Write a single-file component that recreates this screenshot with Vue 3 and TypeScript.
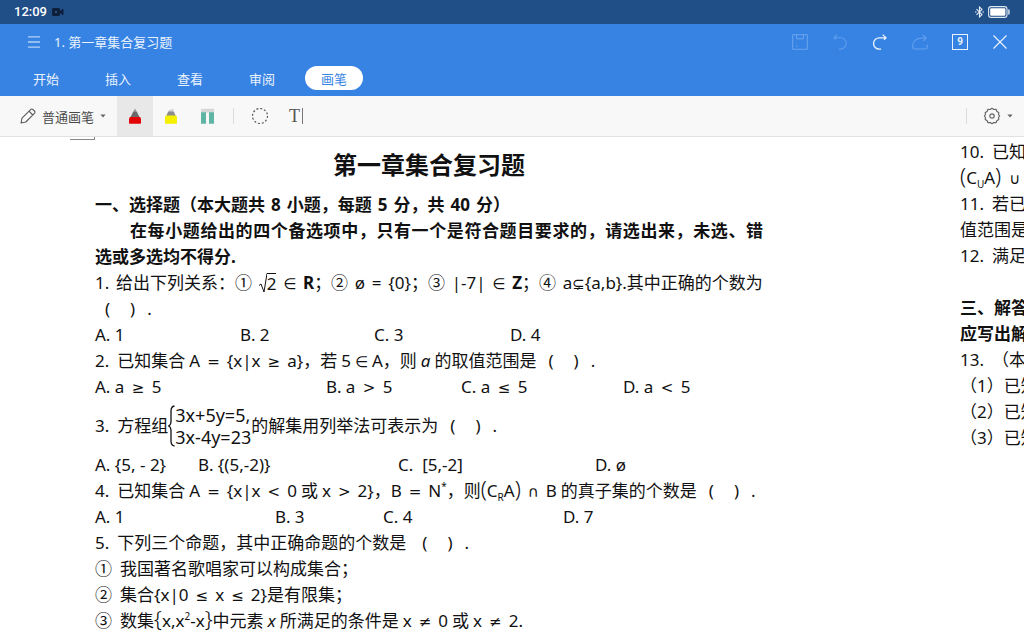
<script setup lang="ts">
import { ref } from 'vue'

const tabs: string[] = ['开始', '插入', '查看', '审阅', '画笔']
const activeTab = ref('画笔')
const activeTool = ref('pen')
</script>

<template>
  <div class="app">
    <div class="status">
      <span class="clock">12:09</span>
      <svg class="cam" width="12" height="8" viewBox="0 0 12 8">
        <rect x="0" y="0" width="8" height="8" rx="1.5" fill="#0d1f3a" />
        <path d="M8 3.5 11 1.2V6.8L8 4.5Z" fill="#0d1f3a" stroke="#0d1f3a" />
        <circle cx="4" cy="4" r="1.1" fill="#3d5f90" />
      </svg>
      <span class="grow"></span>
      <svg width="9" height="12" viewBox="0 0 9 12" fill="none" stroke="#e6eef8" stroke-width="1.1">
        <path d="M1.5 3.2 7 8.6 4.5 11V1L7 3.4 1.5 8.8" />
        <path d="M0 6h1.600M7.400 6H9" />
      </svg>
      <svg class="battery" width="22" height="12" viewBox="0 0 22 12">
        <rect x=".6" y=".6" width="18.4" height="10.8" rx="2.4" fill="none" stroke="#dfe8f3" stroke-width="1.1" />
        <rect x="2.2" y="2.2" width="15.2" height="7.6" rx="1" fill="#fff" />
        <path d="M20.9 3.5v5" stroke="#dfe8f3" stroke-width="1.4" />
      </svg>
    </div>

    <header class="head">
      <div class="titlebar">
        <button class="menu" aria-label="菜单">
          <svg width="12" height="12" viewBox="0 0 12 12" stroke="#b4d2f6" stroke-width="1.3">
            <path d="M0 .8h12M0 6h12M0 11.2h12" />
          </svg>
        </button>
        <span class="name">1. 第一章集合复习题</span>
        <span class="grow"></span>
        <button class="act" aria-label="保存">
          <svg width="16" height="16" viewBox="0 0 16 16" fill="none" stroke="#6ba6ee" stroke-width="1">
            <path d="M.7.7h14.6v14.6H.7zM4.6.7v4.2h6.8V.7M4 12.2h1.4" />
          </svg>
        </button>
        <button class="act" aria-label="撤销">
          <svg width="16" height="16" viewBox="0 0 16 16" fill="none" stroke="#5f9dec" stroke-width="1.1">
            <path d="M5.2.8 2 3.8l1.600 1.800M2.200 3.800H8.600a5.600 5.600 0 0 1 0 11.300H6.800" />
          </svg>
        </button>
        <button class="act" aria-label="恢复">
          <svg width="16" height="16" viewBox="0 0 16 16" fill="none" stroke="#eef5fe" stroke-width="1.300">
            <path d="M10.600.6 14 3.800l-2 2M13.800 3.800H7.200a5.600 5.600 0 0 0 0 11.300h1.900" />
          </svg>
        </button>
        <button class="act" aria-label="分享">
          <svg width="16" height="16" viewBox="0 0 16 16" fill="none" stroke="#65a2ed" stroke-width="1.1">
            <path d="M10.8.8 14.2 4l-2.800 2.800M14 4H9.600C4.600 4 1 7.200.8 11v2.600q0 1.400 1.400 1.400h11.600q1.400 0 1.400-1.400v-2.800" />
          </svg>
        </button>
        <button class="act" aria-label="窗口"><span class="count">9</span></button>
        <button class="act" aria-label="关闭">
          <svg width="14" height="14" viewBox="0 0 14 14" stroke="#e8f1fc" stroke-width="1.2">
            <path d="M.5.5 13.5 13.5M13.5.5.5 13.5" />
          </svg>
        </button>
      </div>
      <nav class="tabs">
        <button
          v-for="t in tabs"
          :key="t"
          :class="['tab', { on: t === activeTab }]"
          @click="activeTab = t"
        >{{ t }}</button>
      </nav>
    </header>

    <div class="tools">
      <button class="brush">
        <svg width="16" height="16" viewBox="0 0 16 16" fill="none" stroke="#5a5a5a" stroke-width="1.1" stroke-linejoin="round">
          <path d="M1 15 2 10.2 10.6 1.6q1.2-1.2 2.4 0l1.4 1.4q1.2 1.2 0 2.4L5.8 14ZM9 3.2 12.8 7" />
        </svg>
        <span>普通画笔</span>
        <svg width="6" height="4" viewBox="0 0 6 4"><path d="M.4.4h5.2L3 3.6Z" fill="#666" /></svg>
      </button>
      <button :class="['tool', { on: activeTool === 'pen' }]" aria-label="钢笔" @click="activeTool = 'pen'">
        <svg width="12" height="16" viewBox="0 0 12 16">
          <path d="M6 .6 8 4.2H4Z" fill="#999" />
          <path d="M4.2 3.8h3.6L11 10H1Z" fill="#6b6b6b" />
          <path d="M1 9h10l1 1.4V15q0 .8-.8.8H.8Q0 15.8 0 15v-4.600Z" fill="#e30505" />
        </svg>
      </button>
      <button :class="['tool', { on: activeTool === 'marker' }]" aria-label="荧光笔" @click="activeTool = 'marker'">
        <svg width="12" height="16" viewBox="0 0 12 16">
          <path d="M3.600 2.400 8.400.4V4.200H3.600Z" fill="#d2d2d2" />
          <path d="M3.200 3.600h5.600L11 8.600H1Z" fill="#8d8d8d" />
          <path d="M1 7.600h10l1 1.400v6q0 .8-.8.8H.8Q0 15.800 0 15V9Z" fill="#f5f000" />
        </svg>
      </button>
      <button :class="['tool', { on: activeTool === 'eraser' }]" aria-label="橡皮" @click="activeTool = 'eraser'">
        <svg width="13" height="16" viewBox="0 0 13 16">
          <path d="M0 .8h13v3.800H0Z" fill="#d6d6d6" />
          <path d="M0 4.200h5v11.600H0zM8 4.200h5v11.600H8z" fill="#5fb5a3" />
        </svg>
      </button>
      <span class="sep"></span>
      <button class="tool" aria-label="套索">
        <svg width="18" height="18" viewBox="0 0 18 18">
          <circle cx="9" cy="9" r="7.500" fill="none" stroke="#555" stroke-width="1.200" stroke-dasharray="2 1.930" />
        </svg>
      </button>
      <button class="tool text-tool" aria-label="文字"><span>T</span><i></i></button>
      <span class="grow"></span>
      <span class="sep"></span>
      <button class="gear" aria-label="设置">
        <svg width="18" height="18" viewBox="0 0 18 18" fill="none" stroke="#666" stroke-width="1.200" stroke-linejoin="round">
          <path d="M7.200 2.500 9 1.300l1.800 1.200 2.200-.2.800 2L15.800 5.700 15.500 7.500 16.600 9l-1.100 1.500.3 1.900-2 1.300-.8 2-2.200-.2L9 16.700l-1.800-1.200-2.200.2-.8-2L2.200 12.400l.3-1.900L1.400 9l1.100-1.500L2.200 5.700 4.200 4.300l.8-2Z" />
          <circle cx="9" cy="9" r="2.200" />
        </svg>
        <svg width="6" height="4" viewBox="0 0 6 4"><path d="M.4.4h5.200L3 3.600Z" fill="#666" /></svg>
      </button>
    </div>

    <main class="doc">
      <span class="mark"></span>
      <article class="page">
        <h1>第一章集合复习题</h1>
        <p class="line bold g6">
          <span>一、选择题（本大题共</span><span>8</span><span>小题，每题</span><span>5</span><span>分，共</span><span>40</span><span>分）</span>
        </p>
        <p class="just bold indent">在每小题给出的四个备选项中，只有一个是符合题目要求的，请选出来，未选、错</p>
        <p class="line bold">选或多选均不得分.</p>

        <p class="line spread">
          <span class="lead">1.</span><span>给出下列关系：①</span><span class="root"><svg width="8" height="20" viewBox="0 0 8 20" fill="none" stroke="#111"><path d="M0 12.500 2 11l3 8L8 .5" /></svg><span>2</span></span><span class="m">∈</span><span><b>R</b>；②</span><span>ø</span><span>=</span><span>{0}；③</span><span>|-7|</span><span class="m">∈</span><span><b>Z</b>；④</span><span>a<span class="rel">⊊</span>{a,b}.其中正确的个数为</span>
        </p>
        <p class="line pad"><span>(</span><span class="blank"></span><span>)</span><span class="dot">.</span></p>
        <div class="line opts q1"><span>A. 1</span><span>B. 2</span><span>C. 3</span><span>D. 4</span></div>

        <p class="line g4">
          <span class="num">2.</span><span>已知集合</span><span>A</span><span class="m">=</span><span>{x|x</span><span class="m">≥</span><span>a}，若</span><span>5</span><span class="rel">∈</span><span>A，则</span><i>a</i><span>的取值范围是</span><span class="ask"><span>(</span><span class="blank"></span><span>)</span><span class="dot">.</span></span>
        </p>
        <div class="line opts q2">
          <span>A. a <span class="m">≥</span> 5</span><span>B. a <span class="m">&gt;</span> 5</span><span>C. a <span class="m">≤</span> 5</span><span>D. a <span class="m">&lt;</span> 5</span>
        </div>

        <div class="system">
          <span class="no">3.</span><span>方程组</span>
          <svg width="7" height="42" viewBox="0 0 7 42" fill="none" stroke="#111" stroke-width="1.300">
            <path d="M6.500 1Q3 1.500 3 6v10q0 4-2.500 5Q3 22 3 26v10q0 4.500 3.500 5" />
          </svg>
          <span class="eqs"><span>3x+5y=5,</span><span>3x-4y=23</span></span>
          <span>的解集用列举法可表示为</span><span class="ask wide"><span>(</span><span class="blank"></span><span>)</span><span class="dot">.</span></span>
        </div>
        <div class="line opts q3"><span>A. {5, - 2}</span><span>B. {(5,-2)}</span><span>C.&nbsp; [5,-2]</span><span>D. ø</span></div>

        <p class="line g4">
          <span class="num">4.</span><span>已知集合</span><span>A</span><span class="m">=</span><span>{x|x</span><span class="m">&lt;</span><span>0</span><span>或</span><span>x</span><span class="m">&gt;</span><span>2}，B</span><span class="m">=</span><span>N<sup>*</sup>，则<span class="big">(</span>C<sub>R</sub>A<span class="big">)</span></span><span class="m">∩</span><span>B</span><span>的真子集的个数是</span><span class="ask"><span>(</span><span class="blank"></span><span>)</span><span class="dot">.</span></span>
        </p>
        <div class="line opts q4"><span>A. 1</span><span>B. 3</span><span>C. 4</span><span>D. 7</span></div>

        <p class="line g4">
          <span class="num">5.</span><span>下列三个命题，其中正确命题的个数是</span><span class="ask wide"><span>(</span><span class="blank"></span><span>)</span><span class="dot">.</span></span>
        </p>
        <p class="line g4"><span class="num">①</span><span>我国著名歌唱家可以构成集合；</span></p>
        <p class="line g4"><span class="num">②</span><span>集合{x|0</span><span class="m">≤</span><span>x</span><span class="m">≤</span><span>2}是有限集；</span></p>
        <p class="line g4">
          <span class="num">③</span><span>数集<span class="big">{</span>x,x<sup>2</sup>-x<span class="big">}</span>中元素</span><i>x</i><span>所满足的条件是</span><span>x</span><span class="m">≠</span><span>0</span><span>或</span><span>x</span><span class="m">≠</span><span>2.</span>
        </p>
      </article>

      <article class="page next">
        <p class="line g8"><span>10.</span><span>已知集合</span></p>
        <p class="line g8"><span><span class="big">(</span>C<sub>U</sub>A<span class="big">)</span></span><span class="rel">∪</span></p>
        <p class="line g8"><span>11.</span><span>若已知</span></p>
        <p class="line">值范围是</p>
        <p class="line g8"><span>12.</span><span>满足</span></p>
        <p class="line"></p>
        <p class="line bold">三、解答题</p>
        <p class="line bold">应写出解答</p>
        <p class="line g8"><span>13.</span><span>（本题</span></p>
        <p class="line"><span>（1）已知</span></p>
        <p class="line"><span>（2）已知</span></p>
        <p class="line"><span>（3）已知</span></p>
      </article>
    </main>
  </div>
</template>

<style>
html, body { margin: 0; background: #fff; }
</style>

<style scoped>
.app {
  height: 100vh;
  display: flex;
  flex-direction: column;
  overflow: hidden;
  background: #fff;
  color: #111;
  font-family: "Noto Sans", "Noto Sans CJK SC", sans-serif;
}
button {
  border: 0;
  padding: 0;
  background: none;
  font: inherit;
  color: inherit;
  display: flex;
  align-items: center;
  justify-content: center;
}
svg { display: block; flex: none; }
.grow { flex: 1; }

.status {
  flex: none;
  display: flex;
  align-items: center;
  height: 24px;
  padding: 0 14px;
  background: #204e87;
  color: #fff;
}
.clock { font: 500 13px/24px Roboto, sans-serif; }
.cam { margin-left: 5px; }
.battery { margin-left: 4px; }

.head {
  flex: none;
  background: #3783e3;
  color: #e9f2fd;
  font-size: 13px;
}
.titlebar { display: flex; align-items: center; height: 36px; padding-right: 4px; }
.name { padding-bottom: 2px; }
.menu { width: 40px; height: 36px; margin-left: 14px; }
.act { width: 40px; height: 36px; }
.count {
  box-sizing: border-box;
  width: 16px;
  height: 16px;
  border: 1px solid #e8f1fc;
  font: 700 10px/14px Roboto, sans-serif;
  text-align: center;
}
.tabs { display: flex; align-items: center; gap: 14px; height: 36px; padding-left: 17px; }
.tab { width: 58px; height: 24px; border-radius: 12px; }
.tab.on { background: #fff; color: #3783e3; }

.tools {
  flex: none;
  display: flex;
  align-items: center;
  height: 40px;
  padding-right: 8px;
  background: #f8f8f8;
  border-bottom: 1px solid #e2e2e2;
  color: #4a4a4a;
}
.brush { gap: 6px; width: 117px; height: 40px; padding: 0 8px 0 17px; box-sizing: border-box; font-size: 13px; }
.tool { width: 36px; height: 40px; }
.tool.on { background: #e8e8e8; }
.sep { width: 1px; height: 16px; margin: 0 8px; background: #dcdcdc; }
.text-tool { gap: 2px; font: 18px/20px "Liberation Serif", serif; color: #555; }
.text-tool i { width: 1px; height: 16px; background: #777; }
.gear { gap: 6px; width: 41px; height: 40px; padding-left: 4px; }

.doc {
  flex: 1;
  position: relative;
  display: grid;
  grid-template-columns: minmax(0, 1fr) 64px;
  gap: 197px;
  padding: 1px 0 0 95px;
  overflow: hidden;
  font-size: 17px;
}
.mark {
  position: absolute;
  left: 70px;
  top: 0;
  width: 24px;
  height: 2px;
  border-right: 1px solid #888;
  border-bottom: 1px solid #888;
}
.page { white-space: nowrap; }
h1 { margin: 0; font-size: 24px; line-height: 54px; text-align: center; }
p { margin: 0; }
.line { display: flex; align-items: baseline; height: 26px; line-height: 26px; }
.spread { justify-content: space-between; }
.bold { font-weight: 700; }
.just { height: 26px; line-height: 26px; text-align: justify; text-align-last: justify; }
.indent { padding-left: 35px; }
.g4 { gap: 4px; }
.g6 { gap: 6px; }
.g8 { gap: 8px; }
.num { padding-right: 4px; }
.no { padding-right: 8px; }
.pad { padding-left: 10px; }
.ask { display: flex; padding-left: 8px; }
.wide { padding-left: 12px; }
.blank { width: 20px; }
.dot { padding-left: 12px; }
.m, .rel { font-family: "DejaVu Sans", sans-serif; font-size: 15px; line-height: 20px; }
.m { margin: 0 3px; }
.spread .m { margin: 0; }
.root { display: flex; align-items: center; align-self: center; line-height: 20px; }
.root span { border-top: 1px solid #111; }
sup, sub { font-size: 10px; line-height: 1px; }
.big { font-size: 22px; line-height: 20px; font-weight: 300; }

.opts { display: grid; }
.q1 { grid-template-columns: 145fr 134fr 136fr 253fr; }
.q2 { grid-template-columns: 231fr 135fr 162fr 140fr; }
.q3 { grid-template-columns: 103fr 200fr 197fr 168fr; }
.q4 { grid-template-columns: 180fr 108fr 180fr 200fr; }

.system { display: flex; align-items: center; height: 52px; line-height: 26px; }
.eqs { display: flex; flex-direction: column; font-size: 18px; line-height: 22px; }
.next { padding-top: 1px; }
</style>
